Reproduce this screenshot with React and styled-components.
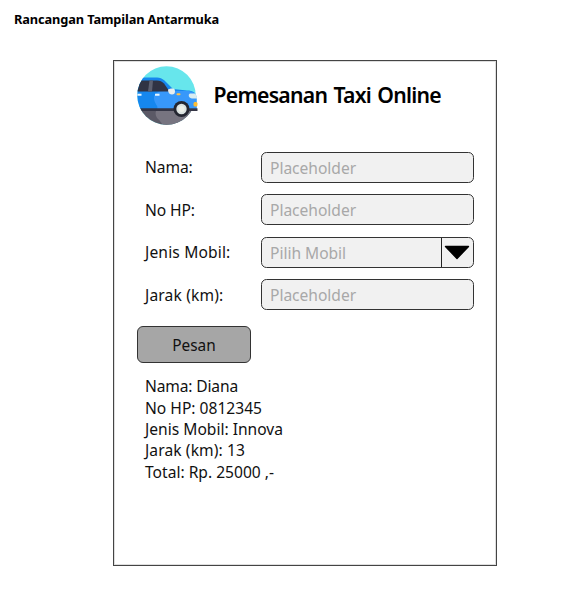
import React from "react";
import styled, { createGlobalStyle } from "styled-components";

const GlobalStyle = createGlobalStyle`
  * { box-sizing: border-box; }
  body {
    margin: 0;
    background: #fff;
    color: #111;
    font-family: "Noto Sans", "Open Sans", sans-serif;
  }
`;

const Page = styled.main`
  width: 568px;
  height: 610px;
  padding: 10px 0 0 14px;
  background: #fff;
`;

const PageTitle = styled.h1`
  margin: 0;
  height: 50px;
  font-size: 12.8px;
  line-height: 19px;
  font-weight: 700;
  letter-spacing: -0.12px;
  color: #000;
`;

const Card = styled.section`
  margin-left: 98.5px;
  width: 384px;
  height: 506px;
  border: 1px solid #444;
  outline: 1px solid rgba(0, 0, 0, 0.13);
  outline-offset: -2px;
  display: flex;
  flex-direction: column;
`;

const Header = styled.header`
  display: flex;
  align-items: center;
  height: 69px;
  padding-left: 23px;
  gap: 15px;
`;

const Logo = styled.svg`
  width: 62px;
  height: 60px;
  flex: none;
`;

const Heading = styled.h2`
  margin: -1px 0 0;
  font-size: 21.2px;
  line-height: 30px;
  font-weight: 650;
  color: #000;
  white-space: nowrap;
  letter-spacing: -0.75px;
  word-spacing: 1.5px;
`;

const Form = styled.form`
  display: grid;
  grid-template-columns: 116px 212.5px;
  grid-auto-rows: 31px;
  row-gap: 11.5px;
  align-items: center;
  margin: 21.5px 0 0 31.5px;
`;

const Label = styled.label`
  padding-top: 1.4px;
  font-size: 15.6px;
  line-height: 31px;
  white-space: nowrap;
  letter-spacing: ${(p) => p.$spacing || "0"};
`;

const Field = styled.div`
  display: flex;
  height: 31px;
  border: 1.4px solid #333;
  border-radius: 5.5px;
  background: #f1f1f1;
  overflow: hidden;
`;

const Hint = styled.span`
  flex: 1;
  padding-left: 8px;
  font-size: 15.6px;
  line-height: 30px;
  color: #a8a8a8;
  white-space: nowrap;
  letter-spacing: -0.03px;
`;

const Arrow = styled.span`
  width: 32px;
  border-left: 1.4px solid #222;
  display: flex;
  align-items: center;
  justify-content: center;

  svg { margin: 1px 1px 0 0; }
`;

const SubmitButton = styled.button`
  margin: 15.8px 0 0 23.5px;
  width: 114px;
  height: 37px;
  padding: 1px 0 0;
  border: 1.4px solid #333;
  border-radius: 6px;
  background: #a6a6a6;
  color: #111;
  font: 15.4px/35px "Noto Sans", sans-serif;
`;

const Summary = styled.div`
  margin: 13.4px 0 0 31.5px;
  display: flex;
  flex-direction: column;
`;

const Line = styled.p`
  margin: 0;
  font-size: 15.6px;
  line-height: 21.4px;
  white-space: nowrap;
  letter-spacing: ${(p) => p.$spacing || "0"};
`;

function TaxiLogo() {
  return (
    <Logo viewBox="0 0 62 60" aria-hidden="true">
      <defs>
        <clipPath id="disc"><circle cx="29.500" cy="29.500" r="29.200" /></clipPath>
        <clipPath id="carClip"><path d="M29.500 .3A29.200 29.200 0 1 0 29.500 58.700L62 58.700V.3z" /></clipPath>
      </defs>
      <g clipPath="url(#disc)">
        <rect width="62" height="60" fill="#67e6ec" />
        <rect y="43" width="62" height="17" fill="#5b5966" />
        <path d="M20 43h42v17H29c-4 0-5-5-8-7-3-3-3-7-1-10z" fill="#777480" />
      </g>
      <g clipPath="url(#carClip)">
        <path d="M0 11.500h20c3 0 5 1 7.500 3L36 23l14 1.500c6 0 9 2 9.500 7V43H0z" fill="#1687ee" />
        <path d="M17 32c0-4 4-7 9-7h26c5 1 7.500 3 7.500 7v11H20c2-3-3-5-3-11z" fill="#3898fa" />
        <path d="M0 14.500h20c3 0 5 1 7 3l5.500 8H0z" fill="#303344" />
        <path d="M12.500 14.500H16L15 25.500h-4z" fill="#5c6071" />
        <path d="M0 27.800h4.500v2H0zM18 27.800h4.500v2H18z" fill="#e9f8ff" />
        <path d="M0 42.300h38v2.700H0z" fill="#353646" />
      </g>
      <path d="M51 42.300h9.500v2.700H51z" fill="#353646" />
      <path d="M31 24c0-1 2-1.500 5-1.500 1.500 0 2 1 2 3s-1 3-3 3-4-1.500-4-4.500z" fill="#e6edf0" />
      <rect x="39.500" y="27.300" width="4" height="2" rx="1" fill="#ffc247" />
      <path d="M53 27.500h5c1.500 1 2 3 2 5h-5c-3 0-4.500-4-2-5z" fill="#d9edf1" />
      <rect x="56.500" y="36" width="4" height="4.500" rx="1.500" fill="#ffbd32" />
      <circle cx="44.500" cy="43" r="8" fill="#242631" />
      <circle cx="44.500" cy="43" r="5.200" fill="#dce3e1" />
      <circle cx="44.500" cy="43" r="3" fill="#eef0e9" />
    </Logo>
  );
}

export default function App() {
  return (
    <>
      <GlobalStyle />
      <Page>
        <PageTitle>Rancangan Tampilan Antarmuka</PageTitle>
        <Card>
          <Header>
            <TaxiLogo />
            <Heading>Pemesanan Taxi Online</Heading>
          </Header>
          <Form>
            <Label $spacing="-0.1px">Nama:</Label>
            <Field><Hint>Placeholder</Hint></Field>
            <Label $spacing="-0.1px">No HP:</Label>
            <Field><Hint>Placeholder</Hint></Field>
            <Label $spacing="0.15px">Jenis Mobil:</Label>
            <Field>
              <Hint>Pilih Mobil</Hint>
              <Arrow>
                <svg width="26" height="15" viewBox="0 0 26 15" aria-hidden="true">
                  <path d="M1.500 1.500h23L13 13.500z" fill="#000" stroke="#000" strokeWidth="1.400" strokeLinejoin="round" />
                </svg>
              </Arrow>
            </Field>
            <Label $spacing="0.15px">Jarak (km):</Label>
            <Field><Hint>Placeholder</Hint></Field>
          </Form>
          <SubmitButton type="button">Pesan</SubmitButton>
          <Summary>
            <Line $spacing="-0.15px">Nama: Diana</Line>
            <Line>No HP: 0812345</Line>
            <Line>Jenis Mobil: Innova</Line>
            <Line $spacing="0.1px">Jarak (km): 13</Line>
            <Line>Total: Rp. 25000 ,-</Line>
          </Summary>
        </Card>
      </Page>
    </>
  );
}
